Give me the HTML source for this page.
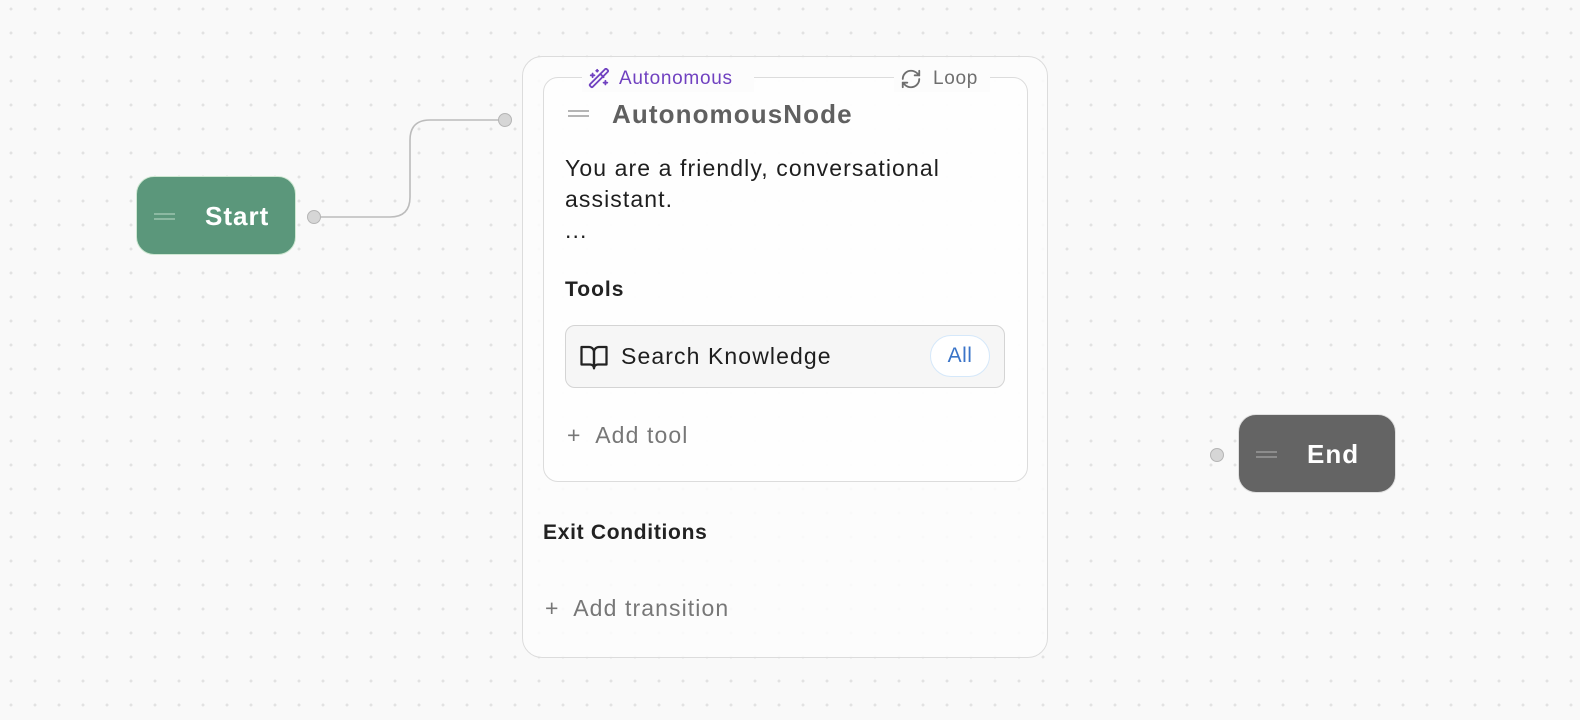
<!DOCTYPE html>
<html><head><meta charset="utf-8"><style>
*{box-sizing:border-box;margin:0;padding:0}
body{width:1580px;height:720px;overflow:hidden;background-color:#f9f9f9;background-image:radial-gradient(circle,#e2e2e2 1.3px,transparent 1.6px);background-size:24px 24px;background-position:-1px -3px;font-family:"Liberation Sans",sans-serif;position:relative}
.abs{position:absolute}
.node{position:absolute;border-radius:18px;color:#fff;font-weight:bold;font-size:26px;letter-spacing:1px;display:flex;align-items:center}
.ham{position:absolute;width:21px;height:7px;border-top:2px solid;border-bottom:2px solid}
.handle{position:absolute;width:14px;height:14px;border-radius:50%;background:#d6d6d6;border:1.5px solid #b5b5b5}
.t{font-size:23px;letter-spacing:1.1px}
</style></head><body>
<svg class="abs" style="left:0;top:0" width="1580" height="720"><path d="M315 217 H390 Q410 217 410 197 V140 Q410 120 430 120 H505" fill="none" stroke="#bcbcbc" stroke-width="1.6"/></svg>

<div class="node" style="left:136px;top:176px;width:160px;height:79px;background:#5b977b;border:1.5px solid #cfe8d3">
<div class="ham" style="left:17px;top:36px;border-color:#8cb9a2"></div>
<span style="position:absolute;left:68px;top:24px">Start</span></div>
<div class="handle" style="left:307px;top:210px"></div>
<div class="handle" style="left:498px;top:113px"></div>

<div class="node" style="left:1238px;top:414px;width:158px;height:79px;background:#646464;border:1.5px solid #e0e0e0">
<div class="ham" style="left:17px;top:36px;border-color:#8c8c8c"></div>
<span style="position:absolute;left:68px;top:24px">End</span></div>
<div class="handle" style="left:1210px;top:448px"></div>

<div class="abs" style="left:522px;top:56px;width:526px;height:602px;border:1.5px solid #dcdcdc;border-radius:20px;background:rgba(253,253,253,0.85)"></div>
<div class="abs" style="left:543px;top:77px;width:485px;height:405px;border:1.5px solid #dcdcdc;border-radius:15px;background:rgba(255,255,255,0.6)"></div>

<div class="abs" style="left:582px;top:66px;width:172px;height:26px;background:#fcfcfc;display:flex;align-items:center;gap:9px;padding-left:6px;color:#7041c0;font-size:19px;letter-spacing:0.7px">
<svg width="22" height="22" viewBox="0 0 24 24" fill="none" stroke="#7041c0" stroke-width="2" stroke-linecap="round" stroke-linejoin="round"><path d="m21.6 2.4-1.2-1.2a1.2 1.2 0 0 0-1.7 0L2.2 17.7a1.2 1.2 0 0 0 0 1.7l1.2 1.2a1.2 1.2 0 0 0 1.7 0L21.6 4.1a1.2 1.2 0 0 0 0-1.7Z"/><path d="m14 7 3 3"/><path d="M5 6v4"/><path d="M19 14v4"/><path d="M10 2v2"/><path d="M7 8H3"/><path d="M21 16h-4"/><path d="M11 3H9"/></svg>Autonomous</div>
<div class="abs" style="left:894px;top:66px;width:96px;height:26px;background:#fcfcfc;display:flex;align-items:center;gap:11px;padding-left:6px;color:#6e6e6e;font-size:19px;letter-spacing:0.7px">
<svg width="22" height="22" viewBox="0 0 24 24" fill="none" stroke="#6e6e6e" stroke-width="2" stroke-linecap="round" stroke-linejoin="round"><path d="M3 12a9 9 0 0 1 9-9 9.75 9.75 0 0 1 6.74 2.74L21 8"/><path d="M21 3v5h-5"/><path d="M21 12a9 9 0 0 1-9 9 9.75 9.75 0 0 1-6.74-2.74L3 16"/><path d="M8 16H3v5"/></svg>Loop</div>

<div class="ham" style="left:568px;top:110px;border-color:#b5b5b5"></div>
<div class="abs" style="left:612px;top:99px;font-size:26px;letter-spacing:1.1px;font-weight:bold;color:#606060">AutonomousNode</div>
<div class="abs t" style="left:565px;top:153px;line-height:31px;color:#1e1e1e">You are a friendly, conversational<br>assistant.<br>...</div>
<div class="abs" style="left:565px;top:278px;font-size:21px;letter-spacing:1px;font-weight:bold;color:#222">Tools</div>
<div class="abs" style="left:565px;top:325px;width:440px;height:63px;border:1.5px solid #d4d4d4;border-radius:10px;background:#f6f6f6"></div>
<svg class="abs" style="left:578px;top:342px" width="32" height="30" viewBox="0 0 24 24" fill="none" stroke="#222" stroke-width="1.8" stroke-linejoin="round"><path d="M2 4h6a4 4 0 0 1 4 4v13a3 3 0 0 0-3-3H2z"/><path d="M22 4h-6a4 4 0 0 0-4 4v13a3 3 0 0 1 3-3h7z"/></svg>
<div class="abs t" style="left:621px;top:343px;color:#1e1e1e">Search Knowledge</div>
<div class="abs" style="left:930px;top:335px;width:60px;height:42px;border:1.5px solid #d5e8fa;border-radius:21px;background:#fff;color:#3a74c8;font-size:21px;letter-spacing:0.5px;display:flex;align-items:center;justify-content:center">All</div>
<div class="abs t" style="left:567px;top:422px;color:#777">+&nbsp; Add tool</div>
<div class="abs" style="left:543px;top:521px;font-size:21px;letter-spacing:0.7px;font-weight:bold;color:#222">Exit Conditions</div>
<div class="abs t" style="left:545px;top:595px;color:#777">+&nbsp; Add transition</div>
</body></html>
